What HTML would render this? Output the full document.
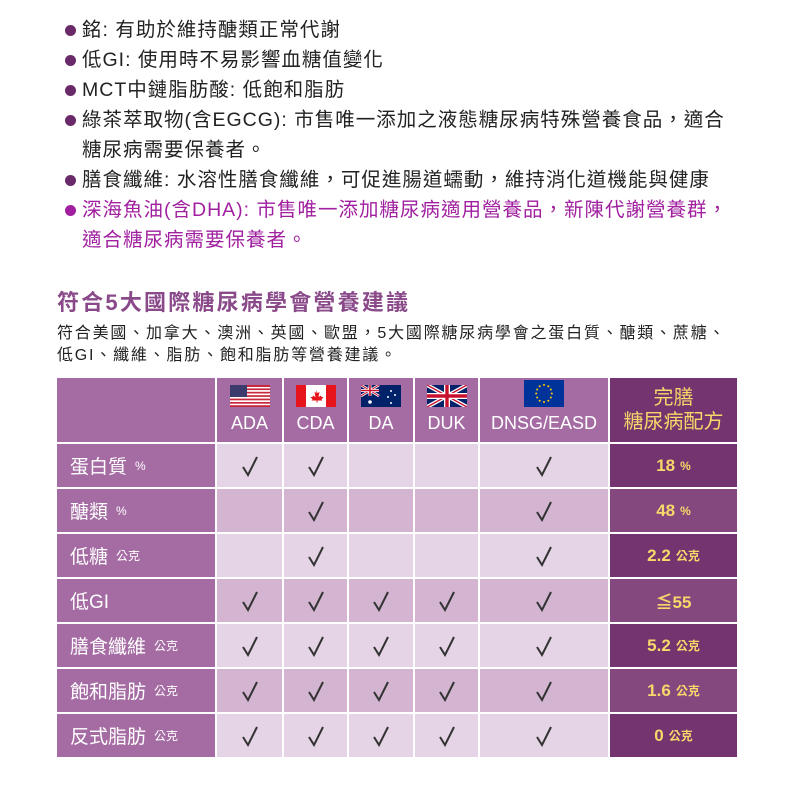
<!DOCTYPE html>
<html><head><meta charset="utf-8"><style>
*{margin:0;padding:0;box-sizing:border-box}
body{width:800px;height:800px;background:#fff;position:relative;overflow:hidden;font-family:"Liberation Sans","Noto Sans CJK TC",sans-serif}
.b{position:absolute;left:82px;font-size:19.5px;letter-spacing:1px;color:#222;white-space:nowrap;line-height:30px}
.b.dot::before{content:"";position:absolute;left:-17px;top:10px;width:11px;height:11px;border-radius:50%;background:#6a2a6a}
.p{color:#a020a0}
.p.dot::before{background:#a020a0}
h2{position:absolute;left:57px;top:285px;font-size:22px;letter-spacing:2.2px;color:#8a4a8a;font-weight:bold;white-space:nowrap}
.s{position:absolute;left:57px;font-size:16px;letter-spacing:1.8px;color:#222;white-space:nowrap}
.c{position:absolute;display:flex;align-items:center;justify-content:center}
.lab{justify-content:flex-start;padding-left:13px;color:#fff;font-size:19px;background:#a56ca4}
.lab small{font-size:12px;margin-left:8px}
.fin{color:#f7d86a;font-size:17px;font-weight:bold}
.fin small{font-size:12px;margin-left:5px}
.hd{background:#a56ca4;color:#fff;font-size:18px;flex-direction:column;justify-content:flex-end;padding-bottom:8px}
.hd svg{margin-bottom:6px}
</style></head><body>
<div class="b dot" style="top:15px">銘: 有助於維持醣類正常代謝</div>
<div class="b dot" style="top:45px">低GI: 使用時不易影響血糖值變化</div>
<div class="b dot" style="top:75px">MCT中鏈脂肪酸: 低飽和脂肪</div>
<div class="b dot" style="top:105px">綠茶萃取物(含EGCG): 市售唯一添加之液態糖尿病特殊營養食品，適合</div>
<div class="b" style="top:135px">糖尿病需要保養者。</div>
<div class="b dot" style="top:165px">膳食纖維: 水溶性膳食纖維，可促進腸道蠕動，維持消化道機能與健康</div>
<div class="b dot p" style="top:195px">深海魚油(含DHA): 市售唯一添加糖尿病適用營養品，新陳代謝營養群，</div>
<div class="b p" style="top:225px">適合糖尿病需要保養者。</div>
<h2>符合5大國際糖尿病學會營養建議</h2>
<div class="s" style="top:319px">符合美國、加拿大、澳洲、英國、歐盟，5大國際糖尿病學會之蛋白質、醣類、蔗糖、</div>
<div class="s" style="top:341px">低GI、纖維、脂肪、飽和脂肪等營養建議。</div>

<div class="c hd" style="left:57px;top:378px;width:158px;height:64px"></div>
<div class="c hd" style="left:217px;top:378px;width:65px;height:64px"><svg width="40" height="22" viewBox="0 0 40 22"><rect width="40" height="22" fill="#fff"/><g fill="#c8283c"><rect y="0" width="40" height="2"/><rect y="3.4" width="40" height="1.7"/><rect y="6.8" width="40" height="1.7"/><rect y="10.2" width="40" height="1.7"/><rect y="13.6" width="40" height="1.7"/><rect y="17" width="40" height="1.7"/><rect y="20.2" width="40" height="1.8"/></g><rect width="17" height="12" fill="#3c3b6e"/></svg>ADA</div>
<div class="c hd" style="left:284px;top:378px;width:63px;height:64px"><svg width="40" height="22" viewBox="0 0 40 22"><rect width="40" height="22" fill="#fff"/><rect width="10" height="22" fill="#e8141c"/><rect x="30" width="10" height="22" fill="#e8141c"/><path d="M20 5l1.5 3 2-1-1 5 2.5-1.5.5 1.5 2 0-2 2.5 1 1h-5v2h-1v-2h-5l1-1-2-2.5 2 0 .5-1.5 2.5 1.5-1-5 2 1z" fill="#e8141c"/></svg>CDA</div>
<div class="c hd" style="left:349px;top:378px;width:64px;height:64px"><svg width="40" height="22" viewBox="0 0 40 22"><rect width="40" height="22" fill="#012169"/><path d="M0 0L18 11M18 0L0 11" stroke="#fff" stroke-width="2.5"/><path d="M0 0L18 11M18 0L0 11" stroke="#c8102e" stroke-width="1"/><path d="M9 0v11M0 5.5h18" stroke="#fff" stroke-width="3"/><path d="M9 0v11M0 5.5h18" stroke="#c8102e" stroke-width="1.6"/><g fill="#fff"><circle cx="9" cy="17" r="1.8"/><circle cx="30" cy="6" r="1"/><circle cx="34" cy="10" r="1"/><circle cx="27" cy="12" r="1"/><circle cx="30" cy="18" r="1"/></g></svg>DA</div>
<div class="c hd" style="left:415px;top:378px;width:63px;height:64px"><svg width="40" height="22" viewBox="0 0 40 22"><rect width="40" height="22" fill="#012169"/><path d="M0 0L40 22M40 0L0 22" stroke="#fff" stroke-width="4"/><path d="M0 0L40 22M40 0L0 22" stroke="#c8102e" stroke-width="1.4"/><path d="M20 0v22M0 11h40" stroke="#fff" stroke-width="6"/><path d="M20 0v22M0 11h40" stroke="#c8102e" stroke-width="3.4"/></svg>DUK</div>
<div class="c hd" style="left:480px;top:378px;width:128px;height:64px"><svg width="40" height="27" viewBox="0 0 40 27"><rect width="40" height="27" fill="#039"/><g fill="#fc0"><circle cx="20" cy="5" r="1"/><circle cx="24.3" cy="6.2" r="1"/><circle cx="26.8" cy="9.5" r="1"/><circle cx="27.8" cy="13.5" r="1"/><circle cx="26.8" cy="17.5" r="1"/><circle cx="24.3" cy="20.8" r="1"/><circle cx="20" cy="22" r="1"/><circle cx="15.7" cy="20.8" r="1"/><circle cx="13.2" cy="17.5" r="1"/><circle cx="12.2" cy="13.5" r="1"/><circle cx="13.2" cy="9.5" r="1"/><circle cx="15.7" cy="6.2" r="1"/></g></svg>DNSG/EASD</div>
<div class="c" style="left:610px;top:378px;width:127px;height:64px;background:#74346f;color:#f7d86a;font-size:20px;flex-direction:column;line-height:24px;text-align:center">完膳<br>糖尿病配方</div>

<div id="rows"></div>
<script>
var rows=[["蛋白質","%",[1,1,0,0,1],"18","%"],["醣類","%",[0,1,0,0,1],"48","%"],["低糖","公克",[0,1,0,0,1],"2.2","公克"],["低GI","",[1,1,1,1,1],"≦55",""],["膳食纖維","公克",[1,1,1,1,1],"5.2","公克"],["飽和脂肪","公克",[1,1,1,1,1],"1.6","公克"],["反式脂肪","公克",[1,1,1,1,1],"0","公克"]];
var cols=[[217,65],[284,63],[349,64],[415,63],[480,128]];
var h='';
rows.forEach(function(r,i){var y=444+i*45;var lt=i%2==0;
h+='<div class="c lab" style="left:57px;top:'+y+'px;width:158px;height:43px">'+r[0]+(r[1]?'<small>'+r[1]+'</small>':'')+'</div>';
cols.forEach(function(c,j){h+='<div class="c" style="left:'+c[0]+'px;top:'+y+'px;width:'+c[1]+'px;height:43px;background:'+(lt?'#e4d4e5':'#d3b5d2')+'">'+(r[2][j]?'<svg width="20" height="22" viewBox="0 0 20 22"><path d="M3 12l5 8L17 2" fill="none" stroke="#333" stroke-width="2"/></svg>':'')+'</div>';});
h+='<div class="c fin" style="left:610px;top:'+y+'px;width:127px;height:43px;background:'+(lt?'#74346f':'#84487f')+'">'+r[3]+(r[4]?'<small>'+r[4]+'</small>':'')+'</div>';});
document.getElementById('rows').innerHTML=h;
</script>
</body></html>
